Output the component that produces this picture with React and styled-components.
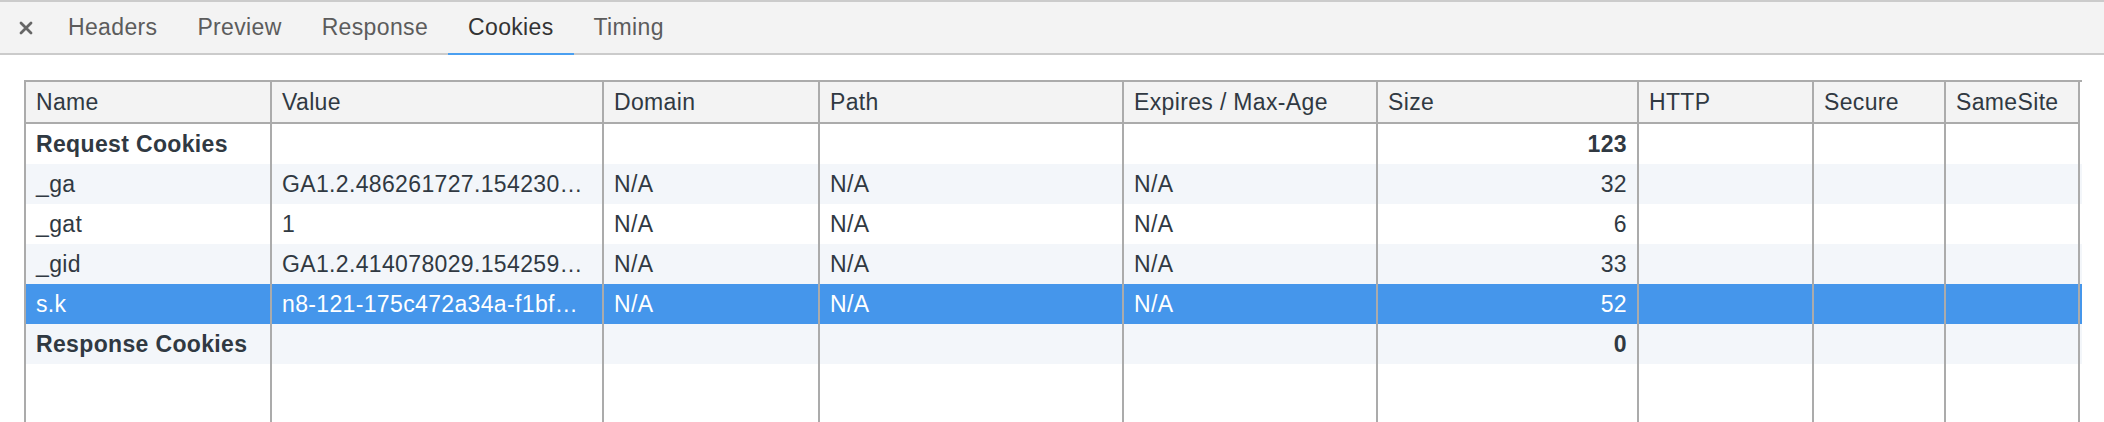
import React from 'react'
import styled, { createGlobalStyle } from 'styled-components'

const GlobalStyle = createGlobalStyle`
  html, body {
    margin: 0;
    padding: 0;
    background: #fff;
    overflow: hidden;
  }
  body {
    font-family: "Liberation Sans", Arial, sans-serif;
  }
`

const COLUMNS = '246px 332px 216px 304px 254px 261px 175px 132px 134px'

const Page = styled.div`
  width: 2104px;
  height: 422px;
  overflow: hidden;
`

const Toolbar = styled.div`
  display: flex;
  align-items: stretch;
  height: 51px;
  background: #f3f3f3;
  border-top: 2px solid #cbcbcb;
  border-bottom: 2px solid #cbcbcb;
`

const CloseButton = styled.div`
  display: flex;
  align-items: center;
  justify-content: center;
  width: 48px;
  padding-left: 4px;
  box-sizing: border-box;
`

const Tab = styled.div`
  position: relative;
  display: flex;
  align-items: center;
  padding: 0 20px;
  font-size: 23px;
  letter-spacing: 0.35px;
  color: ${p => (p.$active ? '#333333' : '#5c5c5c')};
  &::after {
    content: '';
    display: ${p => (p.$active ? 'block' : 'none')};
    position: absolute;
    left: 0;
    right: 0;
    bottom: -2px;
    height: 2px;
    background: #4a9ff0;
  }
`

const Content = styled.div`
  padding: 25px 24px 0;
`

const Table = styled.div`
  width: 2056px;
  border-top: 2px solid #ababab;
  border-left: 2px solid #ababab;
  color: #303942;
  font-size: 23px;
  letter-spacing: 0.35px;
`

const Row = styled.div`
  display: grid;
  grid-template-columns: ${COLUMNS};
  height: ${p => p.$height || 40}px;
  background: ${p => p.$bg || '#fff'};
  color: ${p => (p.$selected ? '#fff' : 'inherit')};
  font-weight: ${p => (p.$bold ? 700 : 400)};
`

const Cell = styled.div`
  border-right: 2px solid #ababab;
  padding: 0 10px;
  line-height: 40px;
  white-space: nowrap;
  overflow: hidden;
  text-overflow: ellipsis;
  text-align: ${p => (p.$right ? 'right' : 'left')};
`

const HeadCell = styled(Cell)`
  background: #f3f3f3;
  border-bottom: 2px solid #ababab;
`

const CloseIcon = () => (
  <svg width="14" height="14" viewBox="0 0 14 14">
    <path d="M2 2 L12 12 M12 2 L2 12" stroke="#666" strokeWidth="2.8" strokeLinecap="round" />
  </svg>
)

const tabs = ['Headers', 'Preview', 'Response', 'Cookies', 'Timing']
const heads = ['Name', 'Value', 'Domain', 'Path', 'Expires / Max-Age', 'Size', 'HTTP', 'Secure', 'SameSite']

// values as the grid shows them, already cut to the column
const rows = [
  { name: 'Request Cookies', size: '123', bold: true },
  { name: '_ga', value: 'GA1.2.486261727.154230…', na: true, size: '32' },
  { name: '_gat', value: '1', na: true, size: '6' },
  { name: '_gid', value: 'GA1.2.414078029.154259…', na: true, size: '33' },
  { name: 's.k', value: 'n8-121-175c472a34a-f1bf…', na: true, size: '52', selected: true },
  { name: 'Response Cookies', size: '0', bold: true },
]

const STRIPE = '#f3f6fa'
const SELECTED = '#4596eb'

export default function App() {
  return (
    <Page>
      <GlobalStyle />
      <Toolbar>
        <CloseButton><CloseIcon /></CloseButton>
        {tabs.map(t => (
          <Tab key={t} $active={t === 'Cookies'}>{t}</Tab>
        ))}
      </Toolbar>
      <Content>
        <Table>
          <Row $height={42}>
            {heads.map(h => <HeadCell key={h}>{h}</HeadCell>)}
          </Row>
          {rows.map((r, i) => (
            <Row
              key={r.name}
              $bold={r.bold}
              $selected={r.selected}
              $bg={r.selected ? SELECTED : i % 2 === 1 ? STRIPE : '#fff'}
            >
              <Cell>{r.name}</Cell>
              <Cell>{r.value || ''}</Cell>
              <Cell>{r.na ? 'N/A' : ''}</Cell>
              <Cell>{r.na ? 'N/A' : ''}</Cell>
              <Cell>{r.na ? 'N/A' : ''}</Cell>
              <Cell $right>{r.size}</Cell>
              <Cell />
              <Cell />
              <Cell />
            </Row>
          ))}
          <Row $height={120}>
            {heads.map(h => <Cell key={h} />)}
          </Row>
        </Table>
      </Content>
    </Page>
  )
}
